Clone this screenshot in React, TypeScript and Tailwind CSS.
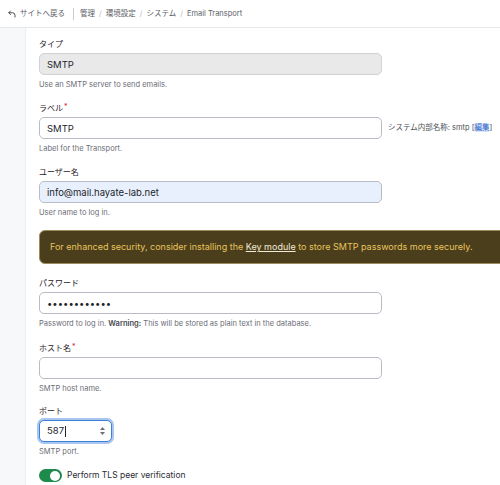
import React from 'react';

const font = { fontFamily: 'Inter, "Noto Sans CJK JP", sans-serif' };

// Label above a field, with optional red asterisk
const FieldLabel: React.FC<{ text: string; required?: boolean }> = ({ text, required }) => (
    <div className="h-[12px] text-[8px] leading-[12px] text-[#1f2026] mb-[3px] whitespace-nowrap">
        {text}
        {required && <span className="text-[#d6232c] ml-[1px] text-[7px] leading-none relative top-[-2px]">*</span>}
    </div>
);

const Description: React.FC<{ children: React.ReactNode }> = ({ children }) => (
    <div className="text-[7.5px] leading-[10px] text-[#6b6d76] mt-[5px]">{children}</div>
);

const inputBase =
    'block h-[22px] w-[343px] rounded-[5px] border border-[#b9bcc6] px-[7px] text-[9.5px] text-[#232429] outline-none';

export default function App() {
    return (
        <div className="w-[500px] h-[485px] overflow-hidden bg-white" style={font}>
            {/* ---------- Breadcrumb bar ---------- */}
            <div className="h-[28px] border-b border-[#e6e7ea] flex items-center pl-[8px] text-[7.5px] text-[#5c5e66]">
                <svg width="8" height="8" viewBox="0 0 16 16" fill="none" stroke="#4a4c55" strokeWidth="2" strokeLinecap="round" strokeLinejoin="round">
                    <path d="M5 2 L1.5 5.5 L5 9" />
                    <path d="M2 5.5 H9 a5 5 0 0 1 5 5 V14" />
                </svg>
                <span className="ml-[4px]">サイトへ戻る</span>
                <span className="ml-[8px] mr-[6px] h-[12px] w-px bg-[#c9cbd1]" />
                <span>管理</span>
                <span className="mx-[4px] text-[#b6b8bf]">/</span>
                <span>環境設定</span>
                <span className="mx-[4px] text-[#b6b8bf]">/</span>
                <span>システム</span>
                <span className="mx-[4px] text-[#b6b8bf]">/</span>
                <span>Email Transport</span>
            </div>

            <div className="flex h-[457px]">
                {/* ---------- Left gutter ---------- */}
                <div className="w-[26px] shrink-0 bg-[#f7f8fa] border-r border-[#eceef1]" />

                {/* ---------- Form ---------- */}
                <div className="pl-[13px] pt-[10px] shrink-0">
                    <div className="mb-[12px]">
                        <FieldLabel text="タイプ" />
                        <input readOnly value="SMTP" className={`${inputBase} bg-[#e9e9ea] border-[#d0d1d5] text-[#5f6068]`} />
                        <Description>Use an SMTP server to send emails.</Description>
                    </div>

                    <div className="mb-[12px]">
                        <FieldLabel text="ラベル" required />
                        <div className="flex items-center">
                            <input readOnly value="SMTP" className={`${inputBase} bg-white`} />
                            <span className="ml-[6px] text-[7.5px] text-[#4b4d55] whitespace-nowrap">
                                システム内部名称: smtp [<span className="text-[#2a62c9] bg-[#dde8fb]">編集</span>]
                            </span>
                        </div>
                        <Description>Label for the Transport.</Description>
                    </div>

                    <div className="mb-[12px]">
                        <FieldLabel text="ユーザー名" />
                        <input readOnly value="info@mail.hayate-lab.net" className={`${inputBase} bg-[#e8f0fe]`} />
                        <Description>User name to log in.</Description>
                    </div>

                    {/* ---------- Security notice ---------- */}
                    <div className="w-[480px] h-[34px] mb-[13px] rounded-[6px] bg-[#4a3e1c] border border-[#9c8c5e] flex items-center pl-[10px] text-[9px] text-[#e9c45c] whitespace-nowrap">
                        For enhanced security, consider installing the&nbsp;
                        <span className="text-[#f3ead6] underline">Key module</span>
                        &nbsp;to store SMTP passwords more securely.
                    </div>

                    <div className="mb-[13px]">
                        <FieldLabel text="パスワード" />
                        <input readOnly type="password" value="abcdefghijkl" className={`${inputBase} bg-white`} />
                        <Description>
                            Password to log in. <span className="font-semibold text-[#44464e]">Warning:</span> This will be stored as plain text in the database.
                        </Description>
                    </div>

                    <div className="mb-[11px]">
                        <FieldLabel text="ホスト名" required />
                        <input readOnly value="" className={`${inputBase} bg-white`} />
                        <Description>SMTP host name.</Description>
                    </div>

                    <div className="mb-[12px]">
                        <FieldLabel text="ポート" />
                        <div className="h-[22px] w-[73px] rounded-[5px] border-[1.5px] border-[#3d7fd9] ring-2 ring-[#a9c6ef] bg-white flex items-center pl-[7px] pr-[6px] mt-[1px]">
                            <span className="text-[9.5px] text-[#232429]">587</span>
                            <span className="h-[11px] w-px bg-[#232429] ml-[1px]" />
                            <div className="ml-auto flex flex-col items-center gap-[2px]">
                                <svg width="5" height="3" viewBox="0 0 5 3"><path d="M2.5 0 L5 3 H0 Z" fill="#6d6f76" /></svg>
                                <svg width="5" height="3" viewBox="0 0 5 3"><path d="M0 0 H5 L2.5 3 Z" fill="#6d6f76" /></svg>
                            </div>
                        </div>
                        <Description>SMTP port.</Description>
                    </div>

                    <div className="flex items-center">
                        <div className="w-[23px] h-[13px] rounded-full bg-[#1e8a4c] flex items-center justify-end pr-[2px]">
                            <div className="w-[10px] h-[10px] rounded-full bg-white" />
                        </div>
                        <span className="ml-[5px] text-[8.5px] text-[#2b2c33]">Perform TLS peer verification</span>
                    </div>
                </div>
            </div>
        </div>
    );
}
